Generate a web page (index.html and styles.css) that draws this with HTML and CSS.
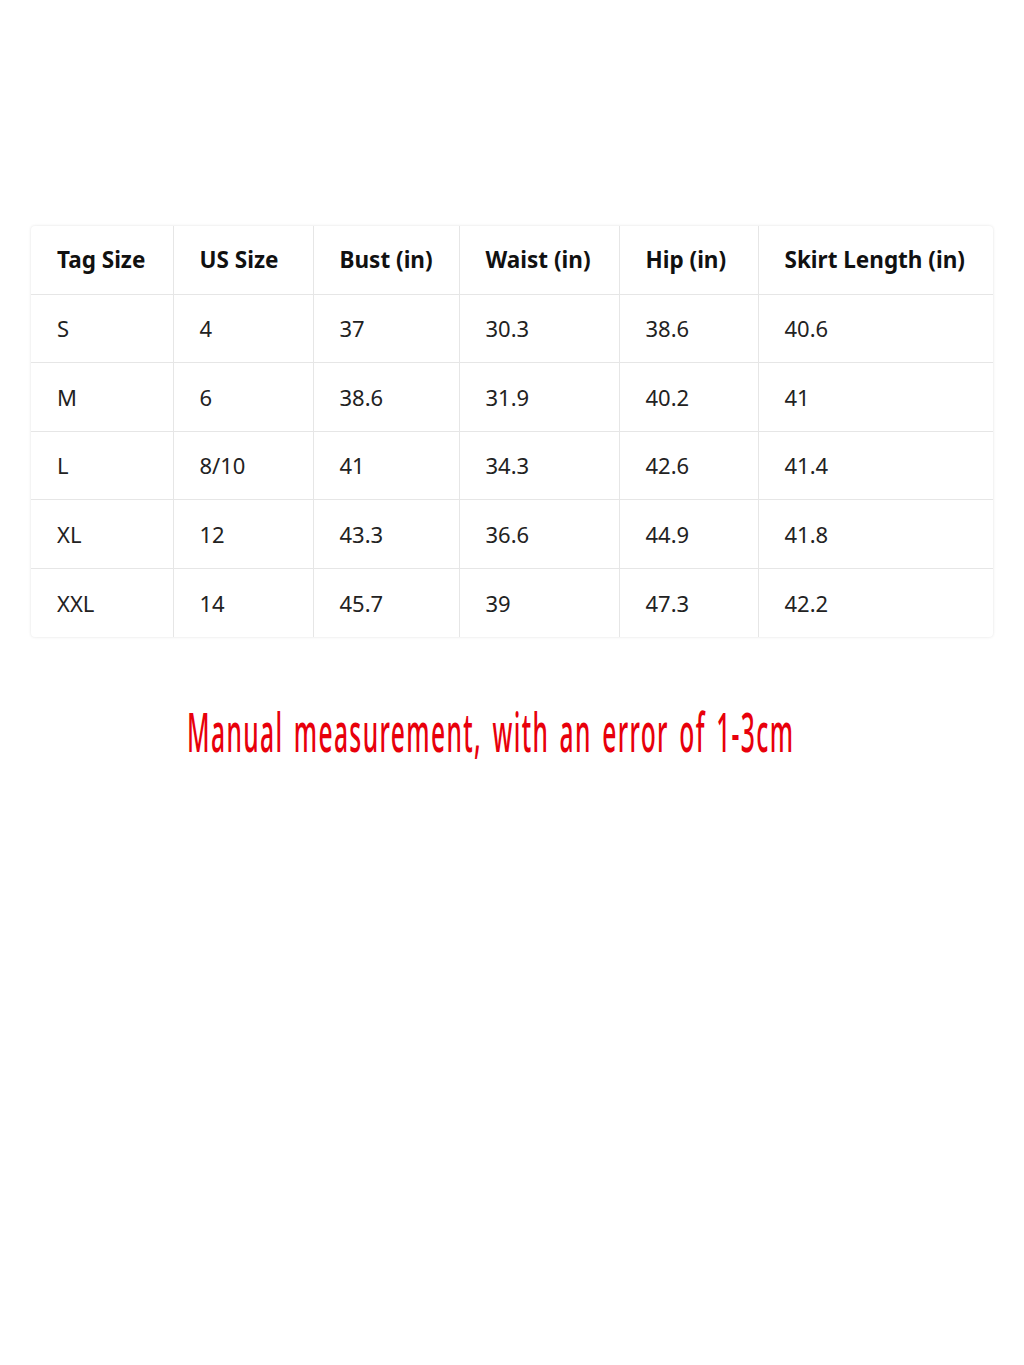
FILE: index.html
```html
<!DOCTYPE html>
<html>
<head>
<meta charset="utf-8">
<link rel="stylesheet" href="styles.css">
</head>
<body>
<div class="page">
  <div class="card">
    <table class="sizes">
      <colgroup>
        <col class="c1"><col class="c2"><col class="c3"><col class="c4"><col class="c5"><col class="c6">
      </colgroup>
      <thead>
        <tr><th>Tag Size</th><th>US Size</th><th>Bust (in)</th><th>Waist (in)</th><th>Hip (in)</th><th>Skirt Length (in)</th></tr>
      </thead>
      <tbody>
        <tr><td>S</td><td>4</td><td>37</td><td>30.3</td><td>38.6</td><td>40.6</td></tr>
        <tr><td>M</td><td>6</td><td>38.6</td><td>31.9</td><td>40.2</td><td>41</td></tr>
        <tr><td>L</td><td>8/10</td><td>41</td><td>34.3</td><td>42.6</td><td>41.4</td></tr>
        <tr><td>XL</td><td>12</td><td>43.3</td><td>36.6</td><td>44.9</td><td>41.8</td></tr>
        <tr><td>XXL</td><td>14</td><td>45.7</td><td>39</td><td>47.3</td><td>42.2</td></tr>
      </tbody>
    </table>
  </div>
  <div class="note"><span class="note-text">Manual measurement, with an error of 1-3cm</span></div>
</div>
</body>
</html>
```
FILE: styles.css
```css
html, body {
  margin: 0;
  padding: 0;
  background: #ffffff;
}
.page {
  width: 1024px;
  height: 1365px;
  padding-top: 226px;
  box-sizing: border-box;
  font-family: "Noto Sans", "Open Sans", sans-serif;
  color: #1a1a1a;
}
.card {
  margin-left: 31px;
  width: 962px;
  border-radius: 4px;
  box-shadow: 0 0 3px rgba(0,0,0,0.12);
  overflow: hidden;
  background: #fff;
}
.sizes {
  width: 962px;
  border-collapse: collapse;
  table-layout: fixed;
}
.c1 { width: 142px; }
.c2 { width: 140px; }
.c3 { width: 146px; }
.c4 { width: 160px; }
.c5 { width: 139px; }
.c6 { width: 235px; }
.sizes th, .sizes td {
  padding: 0 0 0 26px;
  text-align: left;
  border-right: 1px solid #e6e6e6;
  border-bottom: 1px solid #e6e6e6;
  box-sizing: border-box;
  white-space: nowrap;
}
.sizes th:last-child, .sizes td:last-child { border-right: none; }
.sizes tbody tr:last-child td { border-bottom: none; }
.sizes th {
  height: 68px;
  font-size: 22.5px;
  font-weight: 700;
  color: #111;
}
.sizes td {
  height: 68.6px;
  font-size: 22px;
  font-weight: 400;
  color: #222;
}
.note {
  margin-top: 63px;
  width: 1024px;
  height: 64px;
  padding-left: 187px;
  box-sizing: border-box;
}
.note-text {
  display: inline-block;
  font-family: "Noto Sans", sans-serif;
  font-size: 24.6px;
  font-weight: 500;
  letter-spacing: 1.37px;
  word-spacing: 2.6px;
  color: #e8000b;
  transform: scaleY(2.2);
  transform-origin: center center;
  white-space: nowrap;
  line-height: 64px;
}
```
